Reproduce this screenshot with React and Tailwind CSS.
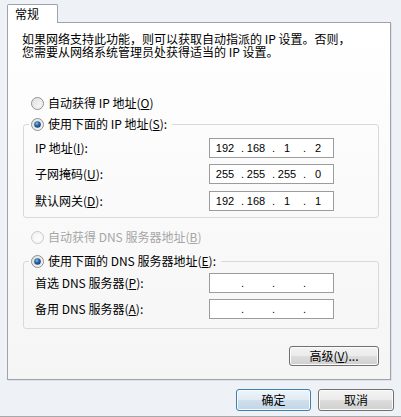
import React from "react";

// Windows 7 style radio button glyph
function Radio({ checked = false, disabled = false, id }) {
  const ring = disabled ? "#c8c8c8" : "#8f8f8f";
  return (
    <svg width="13" height="13" viewBox="0 0 13 13" className="shrink-0">
      <defs>
        <linearGradient id={`bg-${id}`} x1="0" y1="0" x2="1" y2="1">
          <stop offset="0" stopColor={disabled ? "#f4f4f4" : "#dcdcdc"} />
          <stop offset="1" stopColor="#ffffff" />
        </linearGradient>
        <radialGradient id={`dot-${id}`} cx="0.4" cy="0.35" r="0.7">
          <stop offset="0" stopColor="#8cc2f0" />
          <stop offset="0.45" stopColor="#2c67a8" />
          <stop offset="1" stopColor="#173a64" />
        </radialGradient>
      </defs>
      <circle cx="6.5" cy="6.5" r="6" fill={`url(#bg-${id})`} stroke={ring} strokeWidth="1" />
      <circle cx="6.5" cy="6.5" r="4.6" fill="none" stroke={disabled ? "#eeeeee" : "#e6e6e6"} strokeWidth="0.8" />
      {checked && <circle cx="6.5" cy="6.5" r="3.3" fill={`url(#dot-${id})`} />}
    </svg>
  );
}

function Key({ children }) {
  return <span className="underline underline-offset-[1px]">{children}</span>;
}

// Four-part IP address field
function IpBox({ parts = ["", "", "", ""] }) {
  return (
    <div className="flex h-[20px] w-[125px] items-center border border-[#9c9c9c] bg-white pl-[3px] font-['Liberation_Sans',sans-serif] text-[11px] leading-none text-black">
      {parts.map((p, i) => (
        <React.Fragment key={i}>
          <span className="w-[24px] text-center">{p}</span>
          {i < 3 && <span className="w-[7px] text-right">.</span>}
        </React.Fragment>
      ))}
    </div>
  );
}

function Field({ label, parts, extra = "" }) {
  return (
    <div className={`flex h-[20px] items-center ${extra}`}>
      <div className="w-[174px] leading-[14px]">{label}</div>
      <IpBox parts={parts} />
    </div>
  );
}

const btnGrey =
  "bg-[linear-gradient(to_bottom,#f3f3f3_0%,#ebebeb_48%,#dddddd_52%,#cfcfcf_100%)] border-[#707070]";
const btnBlue =
  "bg-[linear-gradient(to_bottom,#eef5fa_0%,#e0ebf3_48%,#cfdfeb_52%,#c3d6e5_100%)] border-[#3c7fb1]";

export default function App() {
  return (
    <div className="flex h-[417px] w-[401px] flex-col border-b border-[#a8a8a8] bg-[#eef2f7] font-['Noto_Sans_CJK_SC',sans-serif] text-[12px] text-black">
      {/* tab strip */}
      <div className="flex pl-[7px] pt-[4px]">
        <div className="relative z-10 -mb-px h-[19px] w-[51px] rounded-t-[2px] border border-b-0 border-[#9ea3a9] bg-white pl-[7px] leading-[17px]">
          常规
        </div>
      </div>

      {/* tab page */}
      <div className="ml-[7px] flex h-[358px] w-[384px] flex-col border border-[#9ea3a9] bg-gradient-to-b from-white to-[#f5f5f5] pl-[14px] pr-[11px] shadow-[1px_1px_0_#dde2e8]">
        <p className="pt-[9px] leading-[13px]">
          如果网络支持此功能，则可以获取自动指派的 IP 设置。否则，
          <br />
          您需要从网络系统管理员处获得适当的 IP 设置。
        </p>

        <div className="ml-[9px] mt-[37px] flex h-[16px] items-center gap-[4px]">
          <Radio id="r1" />
          <span className="leading-[14px]">
            自动获得 IP 地址(<Key>O</Key>)
          </span>
        </div>

        <fieldset className="ml-[1px] mt-[5px] rounded-[3px] border border-[#d5dade] pb-[6px] pl-[5px]">
          <legend className="flex h-[16px] items-center gap-[4px] pl-[2px] pr-[5px]">
            <Radio id="r2" checked />
            <span className="leading-[14px]">
              使用下面的 IP 地址(<Key>S</Key>):
            </span>
          </legend>
          <div className="flex flex-col gap-[6px] pl-[6px] pt-[6px]">
            <Field
              label={
                <>
                  IP 地址(<Key>I</Key>):
                </>
              }
              parts={["192", "168", "1", "2"]}
            />
            <Field
              label={
                <>
                  子网掩码(<Key>U</Key>):
                </>
              }
              parts={["255", "255", "255", "0"]}
            />
            <Field
              label={
                <>
                  默认网关(<Key>D</Key>):
                </>
              }
              parts={["192", "168", "1", "1"]}
              extra="mt-[1px]"
            />
          </div>
        </fieldset>

        <div className="ml-[9px] mt-[11px] flex h-[16px] items-center gap-[4px] text-[#a6a6a6]">
          <Radio id="r3" disabled />
          <span className="leading-[14px]">
            自动获得 DNS 服务器地址(<Key>B</Key>)
          </span>
        </div>

        <fieldset className="ml-[1px] mt-[8px] rounded-[3px] border border-[#d5dade] pb-[9px] pl-[5px]">
          <legend className="flex h-[16px] items-center gap-[4px] pl-[2px] pr-[5px]">
            <Radio id="r4" checked />
            <span className="leading-[14px]">
              使用下面的 DNS 服务器地址(<Key>E</Key>):
            </span>
          </legend>
          <div className="flex flex-col gap-[6px] pl-[6px] pt-[4px]">
            <Field
              label={
                <>
                  首选 DNS 服务器(<Key>P</Key>):
                </>
              }
            />
            <Field
              label={
                <>
                  备用 DNS 服务器(<Key>A</Key>):
                </>
              }
            />
          </div>
        </fieldset>

        <div className="mt-[17px] flex justify-end">
          <button
            className={`h-[20px] w-[90px] rounded-[3px] border shadow-[inset_0_0_0_1px_#fbfbfb] leading-[16px] ${btnGrey}`}
          >
            高级(<Key>V</Key>)...
          </button>
        </div>
      </div>

      {/* dialog buttons */}
      <div className="mt-[9px] flex justify-end gap-[7px] pr-[7px]">
        <button
          className={`h-[22px] w-[75px] rounded-[3px] border shadow-[inset_0_0_0_1px_#f6fbfe] leading-[18px] ${btnBlue}`}
        >
          确定
        </button>
        <button
          className={`h-[22px] w-[76px] rounded-[3px] border shadow-[inset_0_0_0_1px_#fbfbfb] leading-[18px] ${btnGrey}`}
        >
          取消
        </button>
      </div>
    </div>
  );
}
